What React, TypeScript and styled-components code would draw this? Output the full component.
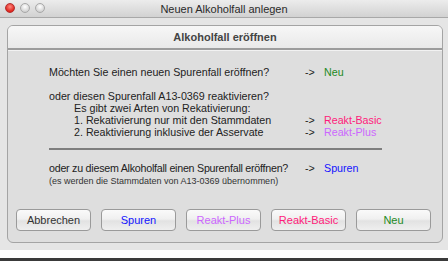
import styled, { createGlobalStyle } from "styled-components";

const GlobalStyle = createGlobalStyle`
  html, body {
    margin: 0;
    padding: 0;
    background: #ffffff;
  }
  body {
    font-family: "Liberation Sans", Arial, sans-serif;
  }
`;

const Window = styled.div`
  width: 448px;
  height: 261px;
  display: flex;
  flex-direction: column;
  overflow: hidden;
  background: #ffffff;
`;

const TitleBar = styled.div`
  position: relative;
  height: 17px;
  flex: none;
  display: flex;
  align-items: center;
  justify-content: center;
  background: linear-gradient(#ececec, #d2d2d2);
  border-bottom: 1px solid #a8a8a8;
  font-size: 11px;
  color: #2a2a2a;
`;

const Lights = styled.div`
  position: absolute;
  left: 5px;
  top: 3px;
  display: flex;
  gap: 5px;
`;

const Light = styled.span<{ $red?: boolean }>`
  width: 10px;
  height: 10px;
  border-radius: 50%;
  box-sizing: border-box;
  border: 1px solid ${(p) => (p.$red ? "#b03030" : "#a8a8a8")};
  background: ${(p) =>
    p.$red
      ? "radial-gradient(circle at 50% 35%, #ff8a80, #e0241c 70%)"
      : "radial-gradient(circle at 50% 35%, #ffffff, #d0d0d0 75%)"};
`;

const Body = styled.div`
  height: 232px;
  flex: none;
  box-sizing: border-box;
  background: #e5e5e5;
  padding: 7px 5px 0 7px;
`;

const Panel = styled.div`
  height: 218px;
  box-sizing: border-box;
  border: 1px solid #a4a4a4;
  border-radius: 6px;
  background: #dedede;
  display: flex;
  flex-direction: column;
  overflow: hidden;
`;

const PanelHeader = styled.div`
  height: 22px;
  flex: none;
  display: flex;
  align-items: center;
  justify-content: center;
  background: linear-gradient(#f7f7f7, #e9e9e9);
  border-bottom: 2px solid #9c9c9c;
  font-size: 11px;
  font-weight: bold;
  color: #444444;
`;

const Content = styled.div`
  flex: 1;
  padding: 15px 0 0 41px;
  display: flex;
  flex-direction: column;
  border-top: 1px solid #f2f2f2;
`;

const Row = styled.div<{ $indent?: boolean; $gap?: number; $tight?: boolean }>`
  display: grid;
  grid-template-columns: ${(p) => (p.$indent ? "231px" : "256px")} 19px auto;
  padding-left: ${(p) => (p.$indent ? "25px" : "0")};
  margin-top: ${(p) => p.$gap ?? 0}px;
  height: 12px;
  line-height: 12px;
  font-size: 10.7px;
  color: #222222;
  white-space: nowrap;

  & > span:first-child {
    letter-spacing: ${(p) => (p.$tight ? "-0.25px" : "0")};
  }
`;

const Value = styled.span<{ $color: string }>`
  color: ${(p) => p.$color};
`;

const Rule = styled.div`
  width: 333px;
  height: 2px;
  margin-top: 10px;
  background: #7e7e7e;
`;

const Note = styled.div`
  margin-top: 1px;
  font-size: 9px;
  line-height: 12px;
  color: #333333;
  white-space: nowrap;
`;

const Buttons = styled.div`
  flex: none;
  margin-bottom: 11px;
  padding-left: 8px;
  display: flex;
  gap: 10px;
`;

const Button = styled.button<{ $color: string }>`
  width: 75px;
  height: 22px;
  box-sizing: border-box;
  padding: 0;
  border: 1px solid #9a9a9a;
  border-radius: 4px;
  background: linear-gradient(#fafafa 0%, #f0f0f0 45%, #e2e2e2 55%, #efefef 100%);
  font-family: "Liberation Sans", Arial, sans-serif;
  font-size: 11px;
  color: ${(p) => p.$color};
`;

const BottomStrip = styled.div`
  flex: 1;
  background: #ffffff;
  border-bottom: 3px solid #3a3a3a;
`;

const GREEN = "#1d8a1d";
const PINK = "#ff1a7a";
const PURPLE = "#cc66ff";
const BLUE = "#1414ff";

export default function App() {
  return (
    <>
      <GlobalStyle />
      <Window>
        <TitleBar>
          <Lights>
            <Light $red />
            <Light />
            <Light />
          </Lights>
          Neuen Alkoholfall anlegen
        </TitleBar>
        <Body>
          <Panel>
            <PanelHeader>Alkoholfall eröffnen</PanelHeader>
            <Content>
              <Row>
                <span>Möchten Sie einen neuen Spurenfall eröffnen?</span>
                <span>-&gt;</span>
                <Value $color={GREEN}>Neu</Value>
              </Row>
              <Row $gap={12}>
                <span>oder diesen Spurenfall A13-0369 reaktivieren?</span>
              </Row>
              <Row $indent>
                <span>Es gibt zwei Arten von Rekativierung:</span>
              </Row>
              <Row $indent>
                <span>1. Rekativierung nur mit den Stammdaten</span>
                <span>-&gt;</span>
                <Value $color={PINK}>Reakt-Basic</Value>
              </Row>
              <Row $indent>
                <span>2. Reaktivierung inklusive der Asservate</span>
                <span>-&gt;</span>
                <Value $color={PURPLE}>Reakt-Plus</Value>
              </Row>
              <Rule />
              <Row $gap={12} $tight>
                <span>oder zu diesem Alkoholfall einen Spurenfall eröffnen?</span>
                <span>-&gt;</span>
                <Value $color={BLUE}>Spuren</Value>
              </Row>
              <Note>(es werden die Stammdaten von A13-0369 übernommen)</Note>
            </Content>
            <Buttons>
              <Button $color="#333333">Abbrechen</Button>
              <Button $color={BLUE}>Spuren</Button>
              <Button $color={PURPLE}>Reakt-Plus</Button>
              <Button $color={PINK}>Reakt-Basic</Button>
              <Button $color={GREEN}>Neu</Button>
            </Buttons>
          </Panel>
        </Body>
        <BottomStrip />
      </Window>
    </>
  );
}
